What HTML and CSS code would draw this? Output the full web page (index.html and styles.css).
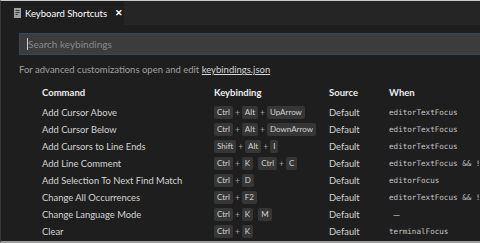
FILE: index.html
```html
<!DOCTYPE html>
<html lang="en">
<head>
    <meta charset="UTF-8">
    <title>Keyboard Shortcuts</title>
    <link rel="stylesheet" href="styles.css">
</head>
<body>
    <div class="window">
        <div class="tab-bar">
            <div class="tab active">
                <svg class="tab-icon" width="7" height="10" viewBox="0 0 7 10">
                    <rect x="0" y="0" width="7" height="10" fill="#a0a0a0"/>
                    <rect x="1.5" y="2" width="4" height="1" fill="#3a3a3a"/>
                    <rect x="1.5" y="4" width="4" height="1" fill="#3a3a3a"/>
                    <rect x="1.5" y="6" width="2.5" height="1" fill="#3a3a3a"/>
                </svg>
                <span class="tab-title">Keyboard Shortcuts</span>
                <span class="tab-close">&#x2715;</span>
            </div>
        </div>

        <div class="editor">
            <div class="search">
                <span class="caret"></span>
                <span class="placeholder">Search keybindings</span>
            </div>

            <p class="hint">For advanced customizations open and edit <a href="#">keybindings.json</a></p>

            <div class="table">
                <div class="row head">
                    <span>Command</span>
                    <span>Keybinding</span>
                    <span>Source</span>
                    <span>When</span>
                </div>
                <div class="row">
                    <span>Add Cursor Above</span>
                    <span class="keys"><kbd>Ctrl</kbd><i>+</i><kbd>Alt</kbd><i>+</i><kbd>UpArrow</kbd></span>
                    <span>Default</span>
                    <span class="when">editorTextFocus</span>
                </div>
                <div class="row">
                    <span>Add Cursor Below</span>
                    <span class="keys"><kbd>Ctrl</kbd><i>+</i><kbd>Alt</kbd><i>+</i><kbd>DownArrow</kbd></span>
                    <span>Default</span>
                    <span class="when">editorTextFocus</span>
                </div>
                <div class="row">
                    <span>Add Cursors to Line Ends</span>
                    <span class="keys"><kbd>Shift</kbd><i>+</i><kbd>Alt</kbd><i>+</i><kbd>I</kbd></span>
                    <span>Default</span>
                    <span class="when">editorTextFocus</span>
                </div>
                <div class="row">
                    <span>Add Line Comment</span>
                    <span class="keys"><kbd>Ctrl</kbd><i>+</i><kbd>K</kbd><b></b><kbd>Ctrl</kbd><i>+</i><kbd>C</kbd></span>
                    <span>Default</span>
                    <span class="when">editorTextFocus &amp;&amp; !</span>
                </div>
                <div class="row">
                    <span>Add Selection To Next Find Match</span>
                    <span class="keys"><kbd>Ctrl</kbd><i>+</i><kbd>D</kbd></span>
                    <span>Default</span>
                    <span class="when">editorFocus</span>
                </div>
                <div class="row">
                    <span>Change All Occurrences</span>
                    <span class="keys"><kbd>Ctrl</kbd><i>+</i><kbd>F2</kbd></span>
                    <span>Default</span>
                    <span class="when">editorTextFocus &amp;&amp; !</span>
                </div>
                <div class="row">
                    <span>Change Language Mode</span>
                    <span class="keys"><kbd>Ctrl</kbd><i>+</i><kbd>K</kbd><b></b><kbd>M</kbd></span>
                    <span>Default</span>
                    <span class="when dash">&mdash;</span>
                </div>
                <div class="row">
                    <span>Clear</span>
                    <span class="keys"><kbd>Ctrl</kbd><i>+</i><kbd>K</kbd></span>
                    <span>Default</span>
                    <span class="when">terminalFocus</span>
                </div>
            </div>
        </div>
    </div>
</body>
</html>
```

FILE: styles.css
```css
:root {
    --bg: #1e1e1e;
    --tab-bar: #252526;
    --text: #d4d4d4;
    --text-strong: #ececec;
    --text-dim: #a0a0a0;
    --key-bg: #363636;
    --input-bg: #3c3c3c;
    --input-border: #34495a;
}

* {
    margin: 0;
    padding: 0;
    box-sizing: border-box;
}

body {
    background: var(--bg);
    color: var(--text);
    font-family: Lato, sans-serif;
    font-size: 10px;
    overflow: hidden;
}

.window {
    height: 243px;
    border-top: 1px solid #c9c9c9;
    border-left: 1px solid #3a3a3a;
    border-bottom: 2px solid #9c9c9c;
    overflow: hidden;
}

.tab-bar {
    display: flex;
    height: 24px;
    background: var(--tab-bar);
}

.tab {
    display: flex;
    align-items: center;
    width: 123px;
    padding-left: 13px;
    background: var(--bg);
    white-space: nowrap;
}

.tab-icon {
    margin-right: 4px;
}

.tab-title {
    color: #ffffff;
    font-size: 9.5px;
}

.tab-close {
    margin-left: 8px;
    color: #ffffff;
    font-size: 8.5px;
    font-weight: bold;
}

.editor {
    padding: 8px 0 0 18px;
}

.search {
    display: flex;
    align-items: center;
    height: 22px;
    padding-left: 7px;
    background: var(--input-bg);
    border: 1px solid var(--input-border);
    border-right: none;
}

.caret {
    width: 1px;
    height: 12px;
    background: #d0d0d0;
}

.placeholder {
    color: #8a8a8a;
    font-size: 10px;
}

.hint {
    margin-top: 9px;
    color: var(--text-dim);
    font-size: 9.5px;
}

.hint a {
    color: var(--text);
    text-decoration: underline;
}

.table {
    margin-top: 7px;
    white-space: nowrap;
}

.row {
    display: grid;
    grid-template-columns: 172px 115px 60px 1fr;
    align-items: center;
    height: 17px;
    padding-left: 23px;
    font-size: 9.4px;
    color: var(--text);
}

.row.head {
    height: 21px;
    margin-bottom: 1px;
    color: var(--text-strong);
    font-weight: bold;
    font-size: 9.5px;
}

.keys {
    display: flex;
    align-items: center;
}

kbd {
    font-family: Lato, sans-serif;
    font-size: 8px;
    line-height: 13px;
    padding: 0 3px;
    background: var(--key-bg);
    border-radius: 2px;
    color: var(--text);
}

.keys i {
    font-style: normal;
    font-size: 8.5px;
    margin: 0 2px;
    color: var(--text-dim);
}

.keys b {
    width: 5px;
}

.when {
    font-family: 'DejaVu Sans Mono', monospace;
    font-size: 7.6px;
    color: #c4c4c4;
    overflow: hidden;
}

.when.dash {
    padding-left: 4px;
    font-family: Lato, sans-serif;
    font-size: 9px;
}
```
